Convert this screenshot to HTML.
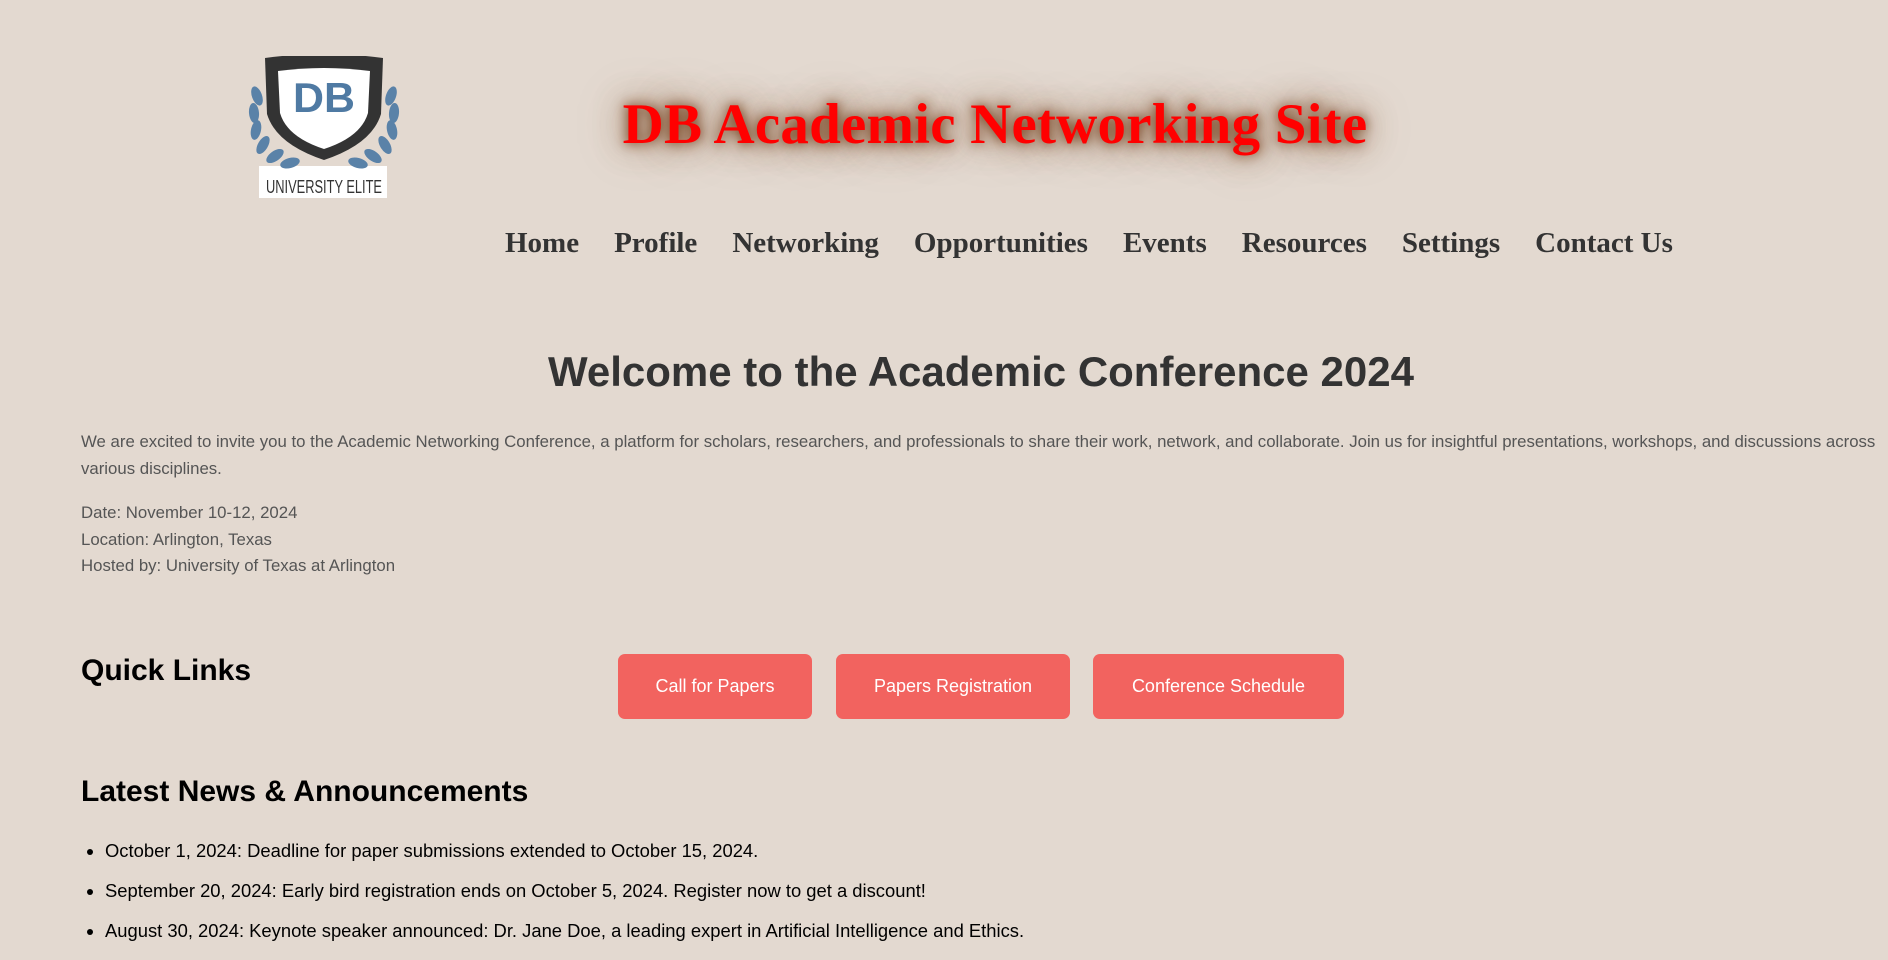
<!DOCTYPE html>
<html><head><meta charset="utf-8"><style>
body{margin:0;background:#e3d9d0;width:1888px;height:939px;overflow:hidden;font-family:"Liberation Sans",sans-serif;position:relative}
.abs{position:absolute}
h1.t{position:absolute;left:0;width:1990px;text-align:center;top:92px;margin:0;font:bold 57px "Liberation Serif",serif;color:#f00;letter-spacing:0.2px;text-shadow:0 0 12px #6e3610,0 0 30px rgba(110,55,20,.7),0 0 50px rgba(130,80,40,.4)}
nav{position:absolute;top:227px;left:505px;font:bold 29px "Liberation Serif",serif;color:#333;white-space:nowrap}
nav span{margin-right:35px}
h2{position:absolute;margin:0;left:0;width:1962px;text-align:center;top:348px;font:bold 42px "Liberation Sans",sans-serif;color:#333}
.p{position:absolute;left:81px;width:1815px;font-size:16.8px;line-height:26.5px;color:#555}
h3{position:absolute;margin:0;left:81px;font:bold 30px "Liberation Sans",sans-serif;color:#000}
.b{position:absolute;top:654px;height:65px;background:#f2635f;border-radius:7px;color:#fff;font-size:18px;display:flex;align-items:center;justify-content:center}
ul{position:absolute;left:87px;top:840px;margin:0;padding-left:18px;font-size:18.4px;color:#000}
ul li{height:40px}
</style></head><body>
<svg class="abs" style="left:245px;top:56px" width="158" height="144" viewBox="0 0 158 144">
<rect x="14" y="110" width="128" height="32" fill="#fff"/>
<g fill="#5a82a8">
<ellipse cx="12" cy="40" rx="5" ry="10" transform="rotate(-20 12 40)"/>
<ellipse cx="9" cy="57" rx="5" ry="10" transform="rotate(-5 9 57)"/>
<ellipse cx="11" cy="74" rx="5" ry="10" transform="rotate(12 11 74)"/>
<ellipse cx="18" cy="89" rx="5" ry="10" transform="rotate(30 18 89)"/>
<ellipse cx="30" cy="100" rx="5" ry="10" transform="rotate(55 30 100)"/>
<ellipse cx="45" cy="107" rx="5" ry="10" transform="rotate(75 45 107)"/>
<ellipse cx="146" cy="40" rx="5" ry="10" transform="rotate(20 146 40)"/>
<ellipse cx="149" cy="57" rx="5" ry="10" transform="rotate(5 149 57)"/>
<ellipse cx="147" cy="74" rx="5" ry="10" transform="rotate(-12 147 74)"/>
<ellipse cx="140" cy="89" rx="5" ry="10" transform="rotate(-30 140 89)"/>
<ellipse cx="128" cy="100" rx="5" ry="10" transform="rotate(-55 128 100)"/>
<ellipse cx="113" cy="107" rx="5" ry="10" transform="rotate(-75 113 107)"/>
</g>
<path d="M20 2 Q79 -6 138 2 L136 58 Q127 88 79 104 Q31 88 22 58 Z" fill="#333"/>
<path d="M33 15 Q79 9 125 15 L123 57 Q116 81 79 93 Q42 81 35 57 Z" fill="#fff"/>
<text x="79" y="56" text-anchor="middle" font-family="Liberation Sans,sans-serif" font-weight="bold" font-size="42" fill="#4f7aa3" textLength="62" lengthAdjust="spacingAndGlyphs">DB</text>
<text x="79" y="137" text-anchor="middle" font-family="Liberation Sans,sans-serif" font-size="18" fill="#333" textLength="116" lengthAdjust="spacingAndGlyphs">UNIVERSITY ELITE</text>
</svg>
<h1 class="t">DB Academic Networking Site</h1>
<nav><span>Home</span><span>Profile</span><span>Networking</span><span>Opportunities</span><span>Events</span><span>Resources</span><span>Settings</span><span style="margin:0">Contact Us</span></nav>
<h2>Welcome to the Academic Conference 2024</h2>
<div class="p" style="top:429px">We are excited to invite you to the Academic Networking Conference, a platform for scholars, researchers, and professionals to share their work, network, and collaborate. Join us for insightful presentations, workshops, and discussions across various disciplines.</div>
<div class="p" style="top:500px">Date: November 10-12, 2024<br>Location: Arlington, Texas<br>Hosted by: University of Texas at Arlington</div>
<h3 style="top:654px">Quick Links</h3>
<div class="b" style="left:618px;width:194px">Call for Papers</div>
<div class="b" style="left:836px;width:234px">Papers Registration</div>
<div class="b" style="left:1093px;width:251px">Conference Schedule</div>
<h3 style="top:775px">Latest News &amp; Announcements</h3>
<ul><li>October 1, 2024: Deadline for paper submissions extended to October 15, 2024.</li><li>September 20, 2024: Early bird registration ends on October 5, 2024. Register now to get a discount!</li><li>August 30, 2024: Keynote speaker announced: Dr. Jane Doe, a leading expert in Artificial Intelligence and Ethics.</li></ul>
</body></html>
